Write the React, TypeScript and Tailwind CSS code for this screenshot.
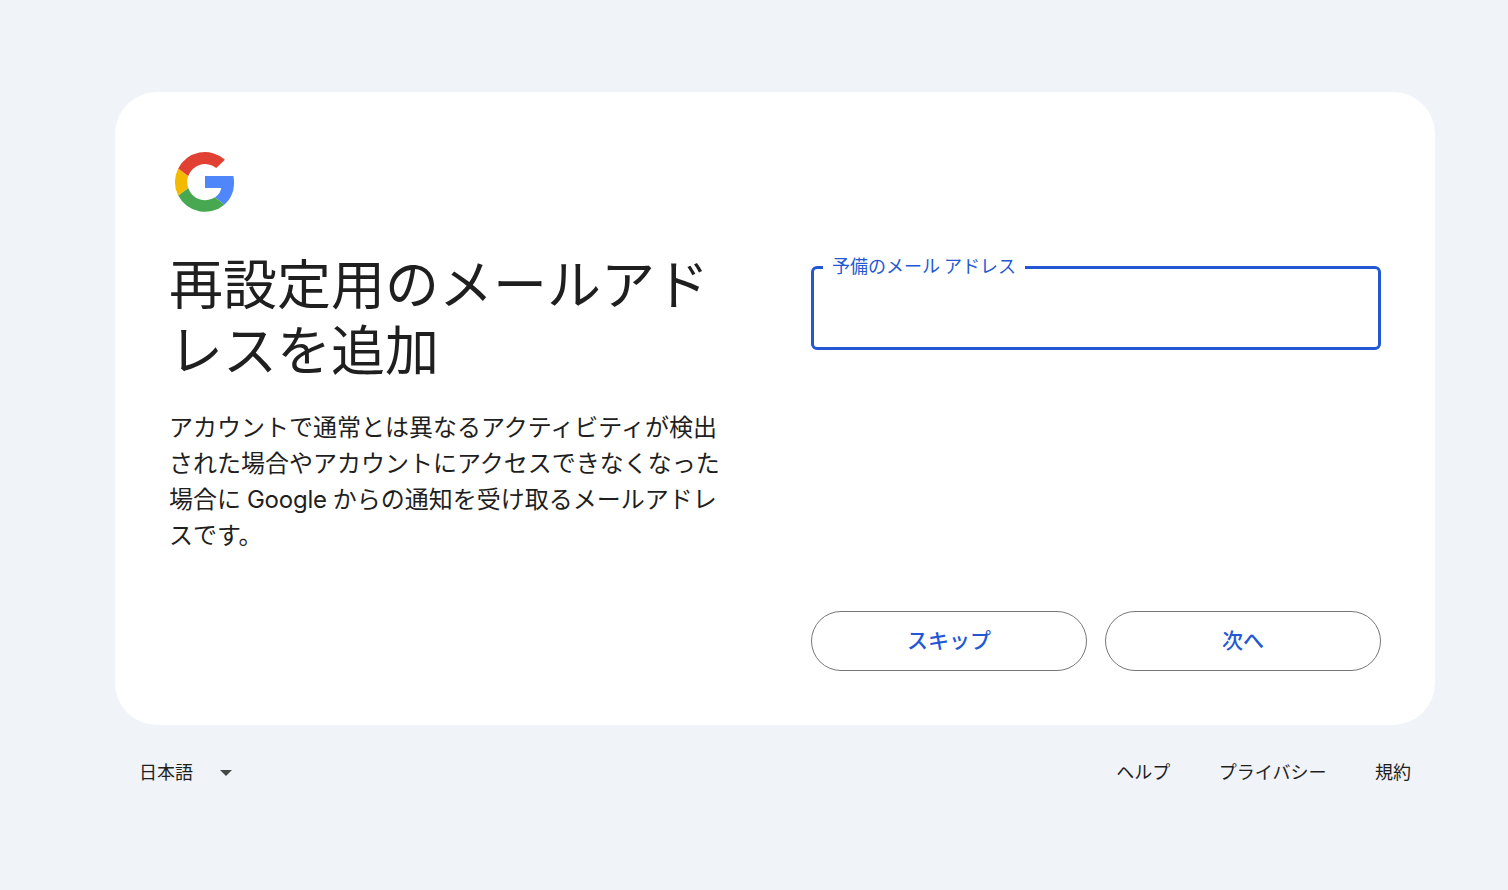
import { useState } from 'react';

const footerLinks = [
  { href: '#help', label: 'ヘルプ' },
  { href: '#privacy', label: 'プライバシー' },
  { href: '#terms', label: '規約' },
];

const GoogleLogo = () => (
  <svg viewBox="0 0 48 48" className="size-[72px]" aria-hidden="true">
    <path
      fill="#4f87fb"
      d="M24 20h18.9c.3 1.4.45 2.9.45 4.5 0 5.9-2.2 11-6.45 14.6l-6.2-4.9c2.1-1.4 3.7-3.5 4.2-6.2H24z"
    />
    <path fill="#48a852" d="M36.9 39.1A20 20 0 0 1 6.15 32.95L12.8 28a12 12 0 0 0 17.9 6.2z" />
    <path fill="#f4ba02" d="M6.15 32.95a20 20 0 0 1 0-17.9L12.8 20a12.4 12.4 0 0 0 0 8z" />
    <path fill="#e14133" d="M6.15 15.05A20 20 0 0 1 37.3 9.1l-5.8 5.6A11.9 11.9 0 0 0 12.8 20z" />
  </svg>
);

const App: React.FC = () => {
  const [email, setEmail] = useState('');

  return (
    <div className="min-h-screen bg-[#f0f3f8] pt-[92px] pl-[115px] font-['Noto_Sans_CJK_JP',sans-serif] text-[#1f1f1f]">
      <div className="w-[1320px]">
        <main className="flex h-[633px] justify-between rounded-[42px] bg-white p-[54px]">
          {/* Heading and description */}
          <section className="w-[570px]">
            <GoogleLogo />
            <h1 className="mt-[31px] text-[54px] leading-[66px]">再設定用のメールアドレスを追加</h1>
            <p className="mt-[27px] w-[558px] text-2xl leading-9 [word-spacing:0.5px]">
              アカウントで通常とは異なるアクティビティが検出された場合やアカウントにアクセスできなくなった場合に{' '}
              <span className="font-['Inter'] leading-none tracking-[-0.2px]">Google</span>{' '}
              からの通知を受け取るメールアドレスです。
            </p>
          </section>

          {/* Form */}
          <form className="flex w-[570px] flex-col justify-between pt-[120px]" onSubmit={(e) => e.preventDefault()}>
            <div className="relative">
              <input
                id="email"
                type="email"
                value={email}
                onChange={(e) => setEmail(e.target.value)}
                className="block h-[84px] w-full rounded-md border-3 border-[#2458d3] px-[21px] text-2xl outline-none"
              />
              <label
                htmlFor="email"
                className="absolute -top-[13px] left-3 w-[202px] bg-white px-[9px] text-lg leading-6 whitespace-nowrap text-[#2458d3]"
              >
                予備のメール アドレス
              </label>
            </div>
            <div className="grid grid-cols-2 gap-[18px]">
              <button type="button" className="h-[60px] rounded-full border border-[#747775] pb-0.5 text-[21px] font-medium text-[#2458d3]">
                スキップ
              </button>
              <button type="submit" className="h-[60px] rounded-full border border-[#747775] pb-0.5 text-[21px] font-medium text-[#2458d3]">
                次へ
              </button>
            </div>
          </form>
        </main>

        <footer className="mt-[34px] flex items-center justify-between px-6 text-lg leading-6">
          <button type="button" className="flex items-center gap-[27px]">
            日本語
            <svg viewBox="0 0 12 6" className="mt-1 h-1.5 w-3" fill="#444746" aria-hidden="true">
              <path d="M0 0h12L6 6z" />
            </svg>
          </button>
          <nav className="flex gap-[48.5px]">
            {footerLinks.map(({ href, label }) => (
              <a key={href} href={href}>
                {label}
              </a>
            ))}
          </nav>
        </footer>
      </div>
    </div>
  );
};

export default App;
